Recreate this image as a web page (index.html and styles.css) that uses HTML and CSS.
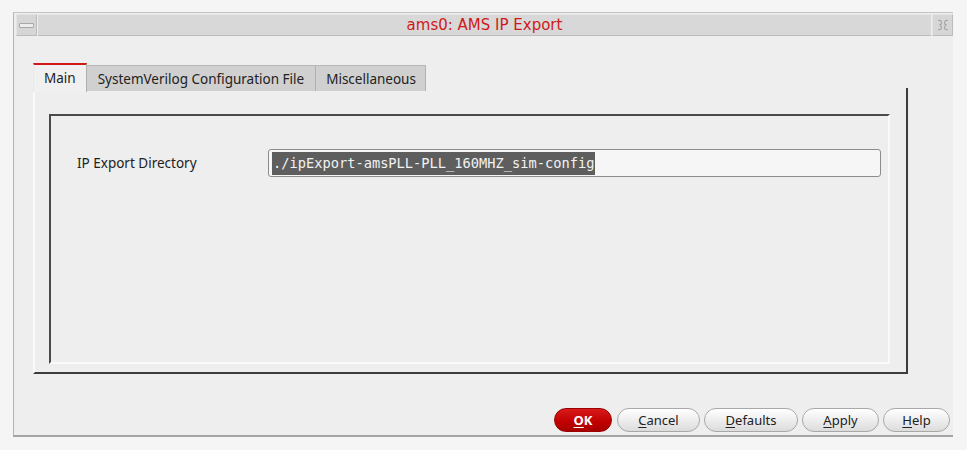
FILE: index.html
```html
<!DOCTYPE html>
<html>
<head>
<meta charset="utf-8">
<link rel="stylesheet" href="styles.css">
</head>
<body>
<div class="window">
  <div class="titlebar">
    <div class="tb-btn tb-left"><span class="dash"></span></div>
    <div class="tb-title">ams0: AMS IP Export</div>
    <div class="tb-btn tb-right">
      <svg width="14" height="14" viewBox="0 0 14 14"><path d="M2 2.5 Q5.5 2 5.5 4.5 Q5.5 6.5 3.5 7 Q5.5 7.5 5.5 9.5 Q5.5 12 2 11.5 M12 2.5 Q8.5 2 8.5 4.5 Q8.5 6.5 10.5 7 Q8.5 7.5 8.5 9.5 Q8.5 12 12 11.5" fill="none" stroke="#a4a4a4" stroke-width="1.2"/></svg>
    </div>
  </div>
  <div class="content">
    <div class="tabs">
      <div class="tab active">Main</div>
      <div class="tab sv">SystemVerilog Configuration File</div>
      <div class="tab misc">Miscellaneous</div>
    </div>
    <div class="pane">
      <div class="group">
        <div class="row">
          <label class="label">IP Export Directory</label>
          <div class="field"><span class="sel">./ipExport-amsPLL-PLL_160MHZ_sim-config</span></div>
        </div>
      </div>
    </div>
  </div>
  <div class="buttons">
    <button class="btn ok"><u>O</u>K</button>
    <button class="btn cancel"><u>C</u>ancel</button>
    <button class="btn defaults"><u>D</u>efaults</button>
    <button class="btn apply"><u>A</u>pply</button>
    <button class="btn help"><u>H</u>elp</button>
  </div>
</div>
</body>
</html>
```
FILE: styles.css
```css
html, body {
  margin: 0;
  padding: 0;
  background: #f5f5f5;
  font-family: "Noto Sans", "DejaVu Sans", sans-serif;
}
body {
  padding: 12px 0 0 13px;
}
.window {
  width: 939px;
  height: 422px;
  background: #eeeeee;
  border-top: 1px solid #c4c4c4;
  border-left: 1px solid #b4b4b4;
  border-bottom: 2px solid #a4a4a4;
  display: flex;
  flex-direction: column;
  box-sizing: content-box;
}
.titlebar {
  display: flex;
  height: 22px;
  margin-top: 1px;
  margin-left: 2px;
  gap: 1px;
}
.tb-btn {
  width: 21px;
  background: #d6d6d6;
  border-top: 1px solid #e4e4e4;
  border-left: 1px solid #e4e4e4;
  border-bottom: 1px solid #bcbcbc;
  border-right: 1px solid #bcbcbc;
  box-sizing: border-box;
  display: flex;
  align-items: center;
  justify-content: center;
}
.dash {
  width: 13px;
  height: 3px;
  background: #ececec;
  border: 1px solid #a8a8a8;
  border-radius: 1px;
}
.tb-title {
  flex: 1;
  background: #d8d8d8;
  border-top: 1px solid #e6e6e6;
  border-bottom: 1px solid #bcbcbc;
  color: #d01818;
  font-family: "DejaVu Sans", sans-serif;
  font-size: 15px;
  text-align: center;
  line-height: 20px;
  box-sizing: border-box;
}
.content {
  padding: 27px 0 0 19px;
}
.tabs {
  display: flex;
  height: 27px;
}
.tab {
  font-size: 13.5px;
  color: #222;
  background: #d0d0d0;
  border-top: 1px solid #b8b8b8;
  border-right: 1px solid #b0b0b0;
  padding: 0 10px 0 10px;
  line-height: 26px;
  margin-top: 2px;
  height: 25px;
}
.tab.sv { padding: 0 11px 0 11px; }
.tab.misc { padding: 0 9px 0 10px; }
.tab.active {
  background: #f0f0f0;
  border-top: 2px solid #d01818;
  border-right: 1px solid #b0b0b0;
  border-left: 1px solid #e8e8e8;
  margin-top: 0;
  height: 27px;
  line-height: 27px;
  padding: 0 10px 0 10px;
}
.pane {
  width: 875px;
  height: 286px;
  border-left: 2px solid #fafafa;
  border-right: 2px solid #3c3c3c;
  border-bottom: 2px solid #3c3c3c;
  border-top: 0;
  padding: 26px 16px 10px 14px;
  box-sizing: border-box;
  margin-top: -2px;
}
.group {
  height: 250px;
  border-top: 2px solid #4a4a4a;
  border-left: 2px solid #4a4a4a;
  border-bottom: 2px solid #fafafa;
  border-right: 2px solid #fafafa;
  box-sizing: border-box;
  padding: 33px 7px 0 26px;
}
.row {
  display: flex;
  align-items: center;
}
.label {
  width: 191px;
  font-size: 13.5px;
  color: #222;
}
.field {
  flex: 1;
  height: 28px;
  border: 1px solid #8c8c8c;
  border-radius: 3px;
  background: #f6f6f6;
  box-sizing: border-box;
  padding: 1px 3px;
  display: flex;
  align-items: center;
}
.sel {
  background: #5e5e5e;
  color: #f2f2f2;
  font-family: "DejaVu Sans Mono", monospace;
  font-size: 13.7px;
  line-height: 23px;
  padding: 0 1px;
}
.buttons {
  margin-top: auto;
  display: flex;
  justify-content: flex-end;
  gap: 4px;
  padding: 0 3px 3px 0;
}
.btn {
  height: 24px;
  border-radius: 12px;
  border: 1px solid #a8a8a8;
  background: linear-gradient(#ffffff, #ececec 55%, #dcdcdc);
  font-family: "Noto Sans", "DejaVu Sans", sans-serif;
  font-size: 13px;
  color: #222;
  padding: 0;
  box-shadow: inset 0 1px 0 #fff;
}
.btn u { text-decoration-thickness: 1px; text-underline-offset: 2px; }
.ok {
  width: 58px;
  margin-right: 1px;
  background: linear-gradient(#d81a1a, #c00000 60%, #a80000);
  border-color: #9a0000;
  color: #fff;
  font-weight: bold;
  box-shadow: none;
}
.cancel { width: 83px; }
.defaults { width: 94px; }
.apply { width: 77px; }
.help { width: 67px; }
```
